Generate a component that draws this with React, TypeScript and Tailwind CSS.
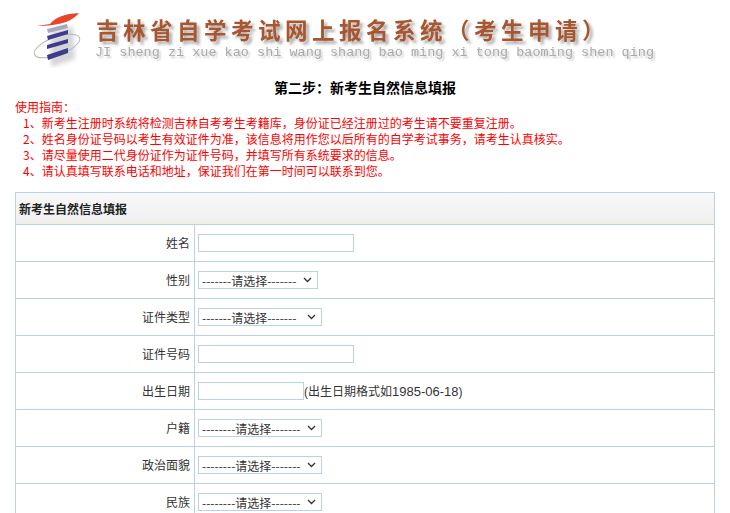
const cjk = "font-['Tahoma','Noto_Sans_CJK_SC',sans-serif]";

function Logo() {
  return (
    <svg width="60" height="60" viewBox="0 0 60 60" className="shrink-0" aria-hidden="true">
      <defs>
        <filter id="b"><feGaussianBlur stdDeviation="0.5" /></filter>
        <filter id="s"><feGaussianBlur stdDeviation="2" /></filter>
      </defs>
      <g filter="url(#s)" opacity="0.35" transform="translate(3 3)">
        <path d="M18 20 L40 16 L42 48 L18 56 Z" fill="#888" />
      </g>
      <g filter="url(#b)">
        <ellipse cx="27" cy="38" rx="24" ry="9" transform="rotate(-20 27 38)" fill="none" stroke="#b8b8b8" strokeWidth="1" />
        <path d="M7 18 L20 16 Q28 6 49 5 Q44 11 36 14 Q24 18 7 18 Z" fill="#e8452a" />
        <path d="M17 21 L37 16 L38 20 L18 25 Z" fill="#a9a9bc" />
        <path d="M17 28 L38 22 L38 26 L18 32 Z" fill="#3e3a8e" />
        <path d="M17 37 L38 31 L38 35 L17 41 Z" fill="#3e3a8e" />
        <path d="M17 47 L38 40 L38 45 L18 52 Z" fill="#3e3a8e" />
      </g>
    </svg>
  );
}

function Row({ label, children }: { label: string; children: React.ReactNode }) {
  return (
    <div className="flex h-[37px] border-t border-[#bdd2e0]">
      <div className="w-[179px] shrink-0 border-r border-[#bdd2e0] pr-[4px] text-right leading-[35px]">{label}</div>
      <div className="flex flex-1 items-center pb-[1px] pl-[3px]">{children}</div>
    </div>
  );
}

function Input({ w }: { w: string }) {
  return <input type="text" className={`${w} h-[18px] border border-[#bdd2e0] bg-white`} />;
}

function Select({ w, dashes }: { w: string; dashes: string }) {
  return (
    <div className={`${w} flex h-[18px] items-center border border-[#bdd2e0] bg-white pl-[3px] pr-[5px] pt-[2px] text-[12px] leading-none`}>
      <span className="flex-1 whitespace-nowrap">{dashes}请选择-------</span>
      <svg width="9" height="6" viewBox="0 0 9 6" className="-mt-[2px]" aria-hidden="true">
        <path d="M1 1 L4.5 4.5 L8 1" fill="none" stroke="#333" strokeWidth="1.3" />
      </svg>
    </div>
  );
}

export default function App() {
  return (
    <div className={`${cjk} h-screen overflow-hidden bg-white text-[12px] text-[#333]`}>
      <div className="flex h-[77px] items-start pl-[30px] pt-[8px]">
        <Logo />
        <div className="ml-[5px] blur-[0.4px]">
          <div className="mt-[7px] whitespace-nowrap pl-[1px] font-['Noto_Sans_CJK_SC',serif] text-[22.5px] font-bold leading-[29px] tracking-[4.5px] text-[#a9562f] [text-shadow:3px_3px_3px_#aaa]">
            吉林省自学考试网上报名系统（考生申请）
          </div>
          <div className="mt-[2px] whitespace-nowrap font-['Liberation_Mono',monospace] text-[13.5px] leading-[14px] text-[#aaa] [text-shadow:2px_2px_2px_#ccc]">
            JI sheng zi xue kao shi wang shang bao ming xi tong baoming shen qing
          </div>
        </div>
      </div>
      <h1 className="h-[22px] text-center text-[14px] font-bold leading-[20px] text-black">第二步：新考生自然信息填报</h1>
      <div className="pl-[15px] leading-[16px] text-[#f00]">
        <div>使用指南：</div>
        <div className="pl-[8px]">
          <div>1、新考生注册时系统将检测吉林自考考生考籍库，身份证已经注册过的考生请不要重复注册。</div>
          <div>2、姓名身份证号码以考生有效证件为准，该信息将用作您以后所有的自学考试事务，请考生认真核实。</div>
          <div>3、请尽量使用二代身份证作为证件号码，并填写所有系统要求的信息。</div>
          <div>4、请认真填写联系电话和地址，保证我们在第一时间可以联系到您。</div>
        </div>
      </div>
      <div className="ml-[15px] mt-[13px] w-[700px] border-x border-t border-[#bdd2e0]">
        <div className="h-[31px] border-b border-[#f3eedc] bg-gradient-to-b from-[#f8f8f8] to-[#efefef] pl-[3px] text-[12px] font-bold leading-[31px] text-[#222]">
          新考生自然信息填报
        </div>
        <Row label="姓名"><Input w="w-[156px]" /></Row>
        <Row label="性别"><Select w="w-[120px]" dashes="-------" /></Row>
        <Row label="证件类型"><Select w="w-[124px]" dashes="-------" /></Row>
        <Row label="证件号码"><Input w="w-[156px]" /></Row>
        <Row label="出生日期">
          <Input w="w-[106px]" />
          <span className="pt-[2px] font-['Liberation_Sans','Noto_Sans_CJK_SC',sans-serif]">(出生日期格式如<span className="text-[13px]">1985-06-18</span>)</span>
        </Row>
        <Row label="户籍"><Select w="w-[124px]" dashes="--------" /></Row>
        <Row label="政治面貌"><Select w="w-[124px]" dashes="--------" /></Row>
        <Row label="民族"><Select w="w-[124px]" dashes="--------" /></Row>
      </div>
    </div>
  );
}
